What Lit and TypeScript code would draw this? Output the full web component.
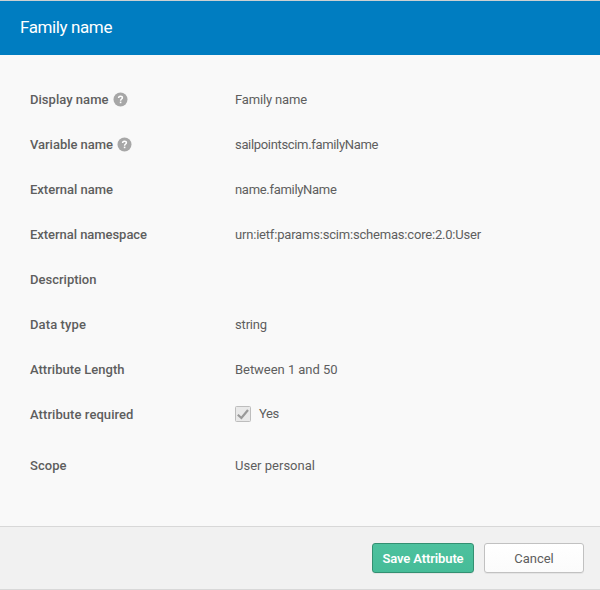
import { LitElement, html, css, svg } from "lit";
import { customElement, property } from "lit/decorators.js";
import { styleMap } from "lit/directives/style-map.js";

const FAMILY = `Roboto, "Liberation Sans", sans-serif`;

const ctx = document.createElement("canvas").getContext("2d")!;

/** Letter spacing that sets a text to the given advance width. */
function tracking(text: string, font: string, width: number): string {
  ctx.font = font;
  return `${((width - ctx.measureText(text).width) / text.length).toFixed(3)}px`;
}

interface Row {
  label: string;
  labelWidth: number;
  value: string;
  valueWidth: number;
  help?: boolean;
  check?: boolean;
}

const ROWS: Row[] = [
  { label: "Display name", labelWidth: 78.5, value: "Family name", valueWidth: 72, help: true },
  { label: "Variable name", labelWidth: 83, value: "sailpointscim.familyName", valueWidth: 143, help: true },
  { label: "External name", labelWidth: 83, value: "name.familyName", valueWidth: 101.5 },
  { label: "External namespace", labelWidth: 117, value: "urn:ietf:params:scim:schemas:core:2.0:User", valueWidth: 246 },
  { label: "Description", labelWidth: 66.5, value: "", valueWidth: 0 },
  { label: "Data type", labelWidth: 56, value: "string", valueWidth: 32 },
  { label: "Attribute Length", labelWidth: 94.5, value: "Between 1 and 50", valueWidth: 102.5 },
  { label: "Attribute required", labelWidth: 103.5, value: "Yes", valueWidth: 20, check: true },
  { label: "Scope", labelWidth: 36.5, value: "User personal", valueWidth: 80 },
];

@customElement("fit-text")
class FitText extends LitElement {
  @property() text = "";
  @property({ type: Number }) size = 13;
  @property({ type: Number }) weight = 400;
  @property({ type: Number }) width = 0;

  static styles = css`
    :host {
      display: inline-block;
      white-space: nowrap;
    }
  `;

  render() {
    const font = `${this.weight} ${this.size}px ${FAMILY}`;
    return html`<span
      style=${styleMap({
        fontSize: `${this.size}px`,
        fontWeight: `${this.weight}`,
        letterSpacing: tracking(this.text, font, this.width),
      })}
      >${this.text}</span
    >`;
  }
}

@customElement("app-root")
class AppRoot extends LitElement {
  static styles = css`
    :host {
      display: flex;
      flex-direction: column;
      box-sizing: border-box;
      height: 590px;
      border-top: 1px solid #cbd0d2;
      border-bottom: 1px solid #d8d8d8;
      background: #f9f9f9;
      color: #5e5e5e;
      font-family: Roboto, "Liberation Sans", sans-serif;
      line-height: 20px;
      overflow: hidden;
    }
    .header {
      display: flex;
      align-items: center;
      flex: none;
      height: 54px;
      padding: 0 20px 2px;
      box-sizing: border-box;
      background: #007dc1;
      color: #fff;
    }
    .body {
      flex: 1;
      padding: 22px 30px 0;
    }
    .row {
      display: grid;
      grid-template-columns: 205px 1fr;
      align-items: center;
      height: 45px;
    }
    .row.check {
      margin-bottom: 6px;
    }
    .row.check .value {
      padding-bottom: 2px;
    }
    .label,
    .value {
      display: flex;
      align-items: center;
    }
    .help {
      margin-left: 4px;
    }
    .box {
      margin-right: 8px;
    }
    svg {
      display: block;
      flex: none;
    }
    .footer {
      display: flex;
      flex: none;
      justify-content: flex-end;
      gap: 10px;
      box-sizing: border-box;
      height: 63px;
      padding: 16px 16px 0;
      border-top: 1px solid #d8d8d8;
      background: #f1f1f1;
    }
    .button {
      display: flex;
      align-items: center;
      justify-content: center;
      box-sizing: border-box;
      height: 30px;
      padding: 0;
      border: 1px solid #c1c1c1;
      border-radius: 3px;
      background: linear-gradient(#fff, #fbfbfb);
      box-shadow: 0 1px 0 rgba(0, 0, 0, 0.05);
      color: #5e5e5e;
      font: inherit;
      width: 100px;
    }
    .button.primary {
      width: 102px;
      border-color: #339072;
      background: linear-gradient(#4dc19e, #46bc98);
      color: #fff;
    }
  `;

  private help() {
    return html`<svg class="help" width="15" height="15" viewBox="0 0 15 15">
      <circle cx="7.5" cy="7.5" r="7" fill="#a7a7a7" />
      ${svg`<path d="M5.6 6.1C5.6 4.7 6.4 4.2 7.5 4.2S9.4 4.8 9.4 5.8C9.4 7 7.6 7 7.6 8.7" fill="none" stroke="#fff" stroke-width="1.5" />
      <rect x="6.8" y="9.6" width="1.6" height="1.6" fill="#fff" />`}
    </svg>`;
  }

  private box() {
    return html`<svg class="box" width="16" height="16" viewBox="0 0 16 16">
      <rect x=".5" y=".5" width="15" height="15" rx="1" fill="#e9e9e9" stroke="#bdbdbd" />
      <path d="M2.8 8.8L6.4 12L13 4" fill="none" stroke="#999" stroke-width="2.2" />
    </svg>`;
  }

  render() {
    return html`
      <div class="header">
        <fit-text text="Family name" size="17" weight="400" width="92"></fit-text>
      </div>
      <div class="body">
        ${ROWS.map(
          (r) => html`<div class="row ${r.check ? "check" : ""}">
            <div class="label">
              <fit-text .text=${r.label} .weight=${500} .width=${r.labelWidth}></fit-text>
              ${r.help ? this.help() : ""}
            </div>
            <div class="value">
              ${r.check ? this.box() : ""}
              ${r.value ? html`<fit-text .text=${r.value} .width=${r.valueWidth}></fit-text>` : ""}
            </div>
          </div>`
        )}
      </div>
      <div class="footer">
        <button class="button primary">
          <fit-text text="Save Attribute" weight="600" width="81"></fit-text>
        </button>
        <button class="button">
          <fit-text text="Cancel" width="39.5"></fit-text>
        </button>
      </div>
    `;
  }
}
